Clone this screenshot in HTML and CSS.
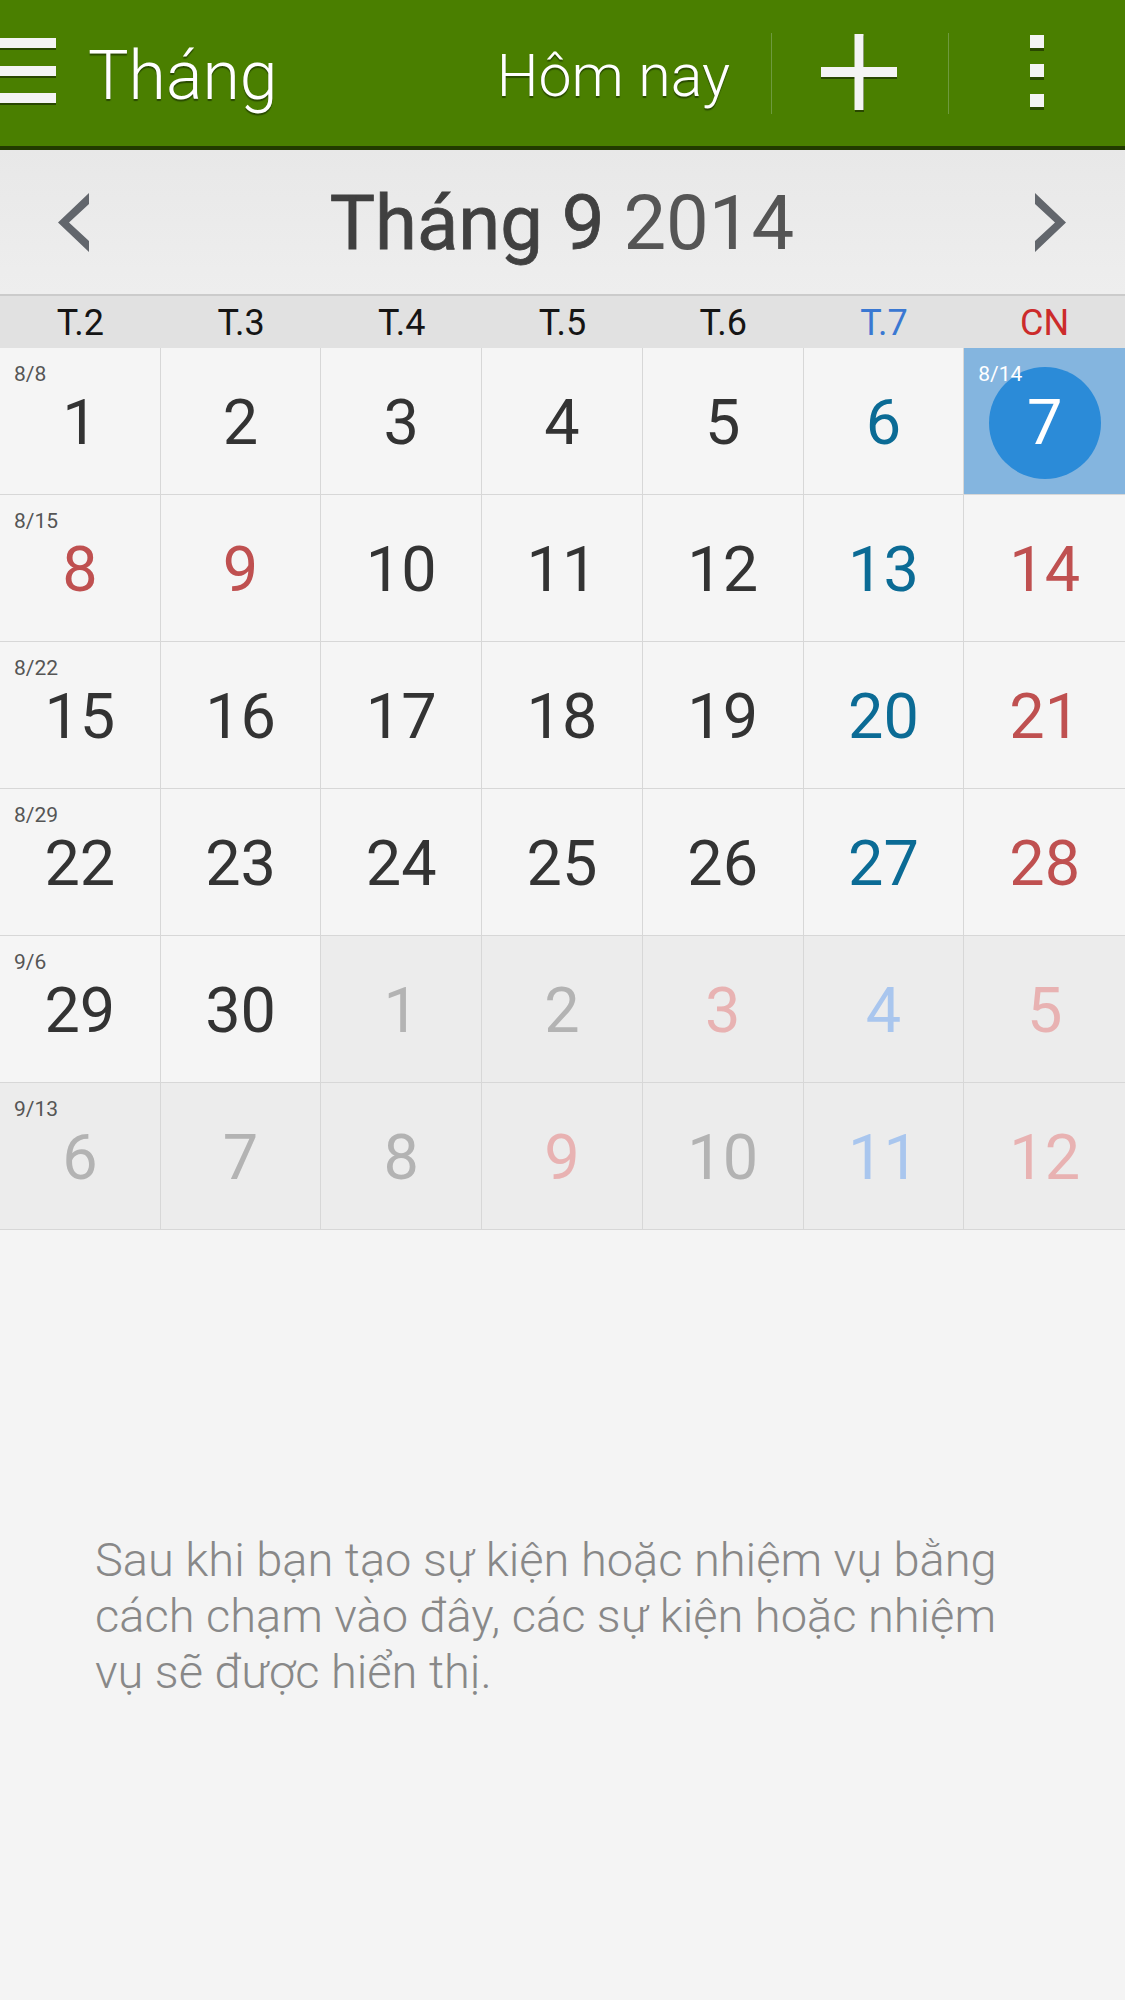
FILE: index.html
```html
<!DOCTYPE html>
<html lang="vi">
<head>
<meta charset="utf-8">
<title>Tháng</title>
<link rel="stylesheet" href="styles.css">
</head>
<body>
<header class="appbar">
  <svg class="menu" width="56" height="68" viewBox="0 0 56 68" aria-hidden="true">
    <g fill="#1c3000" opacity="0.7">
      <rect x="0" y="2" width="56" height="10"/>
      <rect x="0" y="30" width="56" height="10"/>
      <rect x="0" y="57" width="56" height="10"/>
    </g>
    <g fill="#f4f4f4">
      <rect x="0" y="0" width="56" height="10"/>
      <rect x="0" y="28" width="56" height="10"/>
      <rect x="0" y="55" width="56" height="10"/>
    </g>
  </svg>
  <h1 class="title">Tháng</h1>
  <div class="actions">
    <span class="today-btn">Hôm nay</span>
    <span class="sep"></span>
    <span class="icon-btn">
      <svg width="78" height="78" viewBox="0 0 78 78" aria-hidden="true">
        <g fill="#1c3000" opacity="0.7">
          <rect x="34" y="2" width="9" height="76"/>
          <rect x="0" y="35" width="76" height="10"/>
        </g>
        <g fill="#f4f4f4">
          <rect x="33.5" y="0" width="9" height="76"/>
          <rect x="0" y="33" width="76" height="10"/>
        </g>
      </svg>
    </span>
    <span class="sep"></span>
    <span class="icon-btn">
      <svg width="14" height="76" viewBox="0 0 14 76" aria-hidden="true">
        <g fill="#1c3000" opacity="0.7">
          <rect x="0" y="2" width="14" height="14"/>
          <rect x="0" y="31" width="14" height="14"/>
          <rect x="0" y="61" width="14" height="14"/>
        </g>
        <g fill="#f4f4f4">
          <rect x="0" y="0" width="14" height="13"/>
          <rect x="0" y="29" width="14" height="13"/>
          <rect x="0" y="59" width="14" height="13"/>
        </g>
      </svg>
    </span>
  </div>
</header>

<section class="monthbar">
  <svg class="chev" width="31" height="59" viewBox="0 0 31 59" aria-hidden="true">
    <polygon points="31,0 31,11 11,29.5 31,48 31,59 0,29.5" fill="#62666c"/>
  </svg>
  <div class="month-title"><span class="m">Tháng 9</span> <span class="y">2014</span></div>
  <svg class="chev" width="31" height="59" viewBox="0 0 31 59" aria-hidden="true">
    <polygon points="0,0 0,11 20,29.5 0,48 0,59 31,29.5" fill="#62666c"/>
  </svg>
</section>

<div class="weekdays">
  <span>T.2</span><span>T.3</span><span>T.4</span><span>T.5</span><span>T.6</span><span class="sat">T.7</span><span class="sun">CN</span>
</div>

<div class="grid">
  <div class="cell"><span class="lunar">8/8</span><span class="num">1</span></div>
  <div class="cell"><span class="num">2</span></div>
  <div class="cell"><span class="num">3</span></div>
  <div class="cell"><span class="num">4</span></div>
  <div class="cell"><span class="num">5</span></div>
  <div class="cell"><span class="num sat">6</span></div>
  <div class="cell today"><span class="lunar">8/14</span><span class="num"><span class="dot">7</span></span></div>

  <div class="cell"><span class="lunar">8/15</span><span class="num red">8</span></div>
  <div class="cell"><span class="num red">9</span></div>
  <div class="cell"><span class="num">10</span></div>
  <div class="cell"><span class="num">11</span></div>
  <div class="cell"><span class="num">12</span></div>
  <div class="cell"><span class="num sat">13</span></div>
  <div class="cell"><span class="num red">14</span></div>

  <div class="cell"><span class="lunar">8/22</span><span class="num">15</span></div>
  <div class="cell"><span class="num">16</span></div>
  <div class="cell"><span class="num">17</span></div>
  <div class="cell"><span class="num">18</span></div>
  <div class="cell"><span class="num">19</span></div>
  <div class="cell"><span class="num sat">20</span></div>
  <div class="cell"><span class="num red">21</span></div>

  <div class="cell"><span class="lunar">8/29</span><span class="num">22</span></div>
  <div class="cell"><span class="num">23</span></div>
  <div class="cell"><span class="num">24</span></div>
  <div class="cell"><span class="num">25</span></div>
  <div class="cell"><span class="num">26</span></div>
  <div class="cell"><span class="num sat">27</span></div>
  <div class="cell"><span class="num red">28</span></div>

  <div class="cell"><span class="lunar">9/6</span><span class="num">29</span></div>
  <div class="cell"><span class="num">30</span></div>
  <div class="cell other"><span class="num">1</span></div>
  <div class="cell other"><span class="num">2</span></div>
  <div class="cell other"><span class="num red">3</span></div>
  <div class="cell other"><span class="num sat">4</span></div>
  <div class="cell other"><span class="num red">5</span></div>

  <div class="cell other"><span class="lunar">9/13</span><span class="num">6</span></div>
  <div class="cell other"><span class="num">7</span></div>
  <div class="cell other"><span class="num">8</span></div>
  <div class="cell other"><span class="num red">9</span></div>
  <div class="cell other"><span class="num">10</span></div>
  <div class="cell other"><span class="num sat">11</span></div>
  <div class="cell other"><span class="num red">12</span></div>
</div>

<p class="empty">Sau khi bạn tạo sự kiện hoặc nhiệm vụ bằng<br>cách chạm vào đây, các sự kiện hoặc nhiệm<br>vụ sẽ được hiển thị.</p>
</body>
</html>
```

FILE: styles.css
```css
* { box-sizing: border-box; }

html, body {
  margin: 0;
  padding: 0;
}

body {
  background: #f4f4f4;
  font-family: Roboto, "Noto Sans", "DejaVu Sans", sans-serif;
  width: 1125px;
}

/* ---------- App bar ---------- */
.appbar {
  height: 150px;
  background: #4a7f00;
  border-bottom: 4px solid #223a00;
  display: flex;
  align-items: center;
}

.menu {
  display: block;
  flex: none;
  margin-top: -2px;
}

.title {
  margin: 5px 0 0 32px;
  font-size: 68px;
  font-weight: 300;
  color: #ffffff;
  line-height: 1;
  text-shadow: 0 2px 1px rgba(20, 40, 0, 0.6);
}

.actions {
  margin-left: auto;
  display: flex;
  align-items: center;
  height: 100%;
}

.today-btn {
  font-size: 59px;
  font-weight: 300;
  color: #ffffff;
  line-height: 1;
  padding-right: 41px;
  margin-top: 4px;
  text-shadow: 0 2px 1px rgba(20, 40, 0, 0.6);
}

.sep {
  width: 1px;
  height: 81px;
  background: #6e9a3e;
}

.icon-btn {
  width: 176px;
  display: flex;
  justify-content: center;
  align-items: center;
}

.icon-btn svg { display: block; }

/* ---------- Month navigation ---------- */
.monthbar {
  height: 146px;
  background: linear-gradient(#e8e8e8, #eeeeee);
  border-bottom: 2px solid #cbcbcb;
  display: flex;
  align-items: center;
  justify-content: space-between;
  padding: 0 59px 0 58px;
}

.chev { display: block; flex: none; }

.month-title {
  font-size: 76px;
  line-height: 1;
  color: #444444;
  margin-top: 2px;
}

.month-title .m { font-weight: 400; color: #404040; -webkit-text-stroke: 0.8px #404040; }
.month-title .y { font-weight: 400; color: #555555; }

/* ---------- Weekday header ---------- */
.weekdays {
  height: 52px;
  background: #e1e1e1;
  display: grid;
  grid-template-columns: repeat(7, 1fr);
  align-items: center;
  font-size: 36px;
  color: #151515;
  text-align: center;
  line-height: 1;
}

.weekdays span { padding-top: 2px; }
.weekdays .sat { color: #3a78d2; }
.weekdays .sun { color: #cc2b2b; }

/* ---------- Grid ---------- */
.grid {
  display: grid;
  grid-template-columns: repeat(7, 1fr);
  grid-auto-rows: 147px;
}

.cell {
  position: relative;
  background: #f5f5f5;
  border-right: 1px solid #d7d7d7;
  border-bottom: 1px solid #d7d7d7;
  display: flex;
  align-items: center;
  justify-content: center;
  padding-top: 4px;
}

.cell:nth-child(7n) { border-right: none; }

.cell.other { background: #ececec; }

.lunar {
  position: absolute;
  top: 16px;
  left: 14px;
  font-size: 21px;
  line-height: 21px;
  color: #555555;
  z-index: 2;
}

.num {
  font-size: 63px;
  line-height: 54px;
  color: #333333;
}

.num.red { color: #bf5050; }
.num.sat { color: #0b6b95; }

.other .num { color: #b3b3b3; }
.other .num.red { color: #e8b2b2; }
.other .num.sat { color: #a9c6ee; }

.cell.today { background: #84b5df; }
.today .lunar { color: #ffffff; }

.dot {
  width: 112px;
  height: 112px;
  border-radius: 50%;
  background: #2b8bd8;
  color: #ffffff;
  display: flex;
  align-items: center;
  justify-content: center;
}

/* ---------- Empty message ---------- */
.empty {
  margin: 302px 0 0 0;
  padding-left: 95px;
  font-size: 47px;
  font-weight: 300;
  line-height: 56px;
  color: #888888;
}
```
